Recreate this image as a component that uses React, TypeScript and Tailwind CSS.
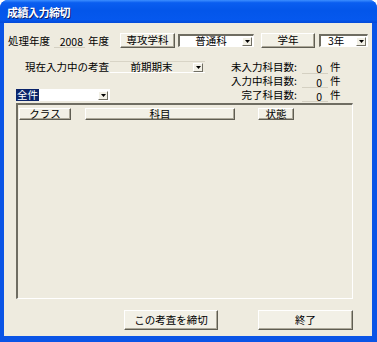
import React from "react";

const FONT = "font-['Noto_Sans_CJK_JP','Noto_Sans_CJK_SC',sans-serif]";

function Arrow() {
  return (
    <div className="w-[10px] h-[9px] flex items-center justify-center bg-[#F2F0E6] border-t border-l border-white border-r border-b border-r-[#716F64] border-b-[#716F64]">
      <svg width="5" height="3" viewBox="0 0 5 3">
        <path d="M0 0h5L2.5 3z" fill="#000" />
      </svg>
    </div>
  );
}

function Btn({ className, children }: { className: string; children: React.ReactNode }) {
  return (
    <div
      className={`flex items-center justify-center bg-[#F2F0E6] border-t border-l border-white border-r border-b border-r-[#5F5D52] border-b-[#5F5D52] shadow-[inset_-1px_-1px_0_#ACA899] leading-none ${className}`}
    >
      {children}
    </div>
  );
}

function Combo({ className, children }: { className: string; children: React.ReactNode }) {
  return (
    <div
      className={`flex items-center bg-white border-t-2 border-l-2 border-t-[#6F6D62] border-l-[#6F6D62] border-b border-r border-b-white border-r-white leading-none ${className}`}
    >
      <div className="flex-1 flex items-center h-full">{children}</div>
      <div className="mr-[1px]">
        <Arrow />
      </div>
    </div>
  );
}

function CountRow({ label }: { label: string }) {
  return (
    <div className="flex items-center h-[14px]">
      <span className="w-[67px] text-right">{label}</span>
      <span className="ml-[5px] w-[26px] h-[13px] pr-[6px] text-right border-b border-[#D4D0C2]">0</span>
      <span className="ml-[2px]">件</span>
    </div>
  );
}

export default function App() {
  return (
    <div className={`w-[377px] h-[342px] flex flex-col bg-[#0A54E6] rounded-t-[8px] overflow-hidden text-[10.5px] text-black ${FONT}`}>
      {/* title bar */}
      <div className="h-[23px] shrink-0 flex items-center pl-[7px] pt-[1px] bg-[linear-gradient(to_bottom,#3C8EFF_0%,#0A5EF0_12%,#0356EA_45%,#0558EE_85%,#0349D8_100%)]">
        <span className="text-white font-bold text-[11px] tracking-[-0.5px] [text-shadow:1px_1px_0_#0A1E6A]">成績入力締切</span>
      </div>

      {/* client area */}
      <div className="flex-1 ml-[4px] mr-[5px] mb-[6px] bg-[#EEEBDF] flex flex-col">
        {/* row 1 */}
        <div className="flex items-center mt-[10px] h-[15px]">
          <span className="ml-[4px] w-[46px]">処理年度</span>
          <span className="w-[31px] h-[14px] pr-[2px] text-right border-b border-[#D4D0C2]">2008</span>
          <span className="ml-[3px] w-[32px]">年度</span>
          <Btn className="w-[55px] h-[15px]">専攻学科</Btn>
          <Combo className="ml-[3px] w-[76px] h-[13px]">
            <span className="w-full text-center">普通科</span>
          </Combo>
          <Btn className="ml-[7px] w-[54px] h-[15px]">学年</Btn>
          <Combo className="ml-[4px] w-[49px] h-[13px]">
            <span className="pl-[7px]">3年</span>
          </Combo>
        </div>

        {/* status rows */}
        <div className="flex mt-[12px]">
          <div className="w-[226px] flex flex-col pt-[1px]">
            <div className="flex items-center h-[12px]">
              <span className="ml-[21px] w-[85px]">現在入力中の考査</span>
              <div className="w-[95px] h-[12px] flex items-center border-t border-[#D8D4C6] border-b border-b-white">
                <span className="flex-1 text-center leading-none">前期期末</span>
                <div className="mr-[2px]">
                  <Arrow />
                </div>
              </div>
            </div>
            <div className="mt-[16px] ml-[12px] w-[94px] h-[12px] flex items-center bg-white">
              <span className="h-full px-[1px] flex items-center bg-[#0A246A] text-white leading-none">全件</span>
              <span className="flex-1" />
              <div className="mr-[2px]">
                <Arrow />
              </div>
            </div>
          </div>
          <div className="flex flex-col">
            <CountRow label="未入力科目数:" />
            <CountRow label="入力中科目数:" />
            <CountRow label="完了科目数:" />
          </div>
        </div>

        {/* list */}
        <div className="mt-[1px] ml-[12px] w-[337px] h-[196px] border-t-2 border-l-2 border-t-[#6F6D62] border-l-[#6F6D62] border-b border-r border-b-white border-r-white">
          <div className="flex mt-[3px]">
            <Btn className="ml-[1px] w-[52px] h-[12px]">クラス</Btn>
            <Btn className="ml-[14px] w-[150px] h-[12px]">科目</Btn>
            <Btn className="ml-[23px] w-[36px] h-[12px]">状態</Btn>
          </div>
        </div>

        {/* bottom buttons */}
        <div className="flex mt-[11px]">
          <Btn className="ml-[120px] w-[94px] h-[20px]">この考査を締切</Btn>
          <Btn className="ml-[40px] w-[95px] h-[20px]">終了</Btn>
        </div>
      </div>
    </div>
  );
}
